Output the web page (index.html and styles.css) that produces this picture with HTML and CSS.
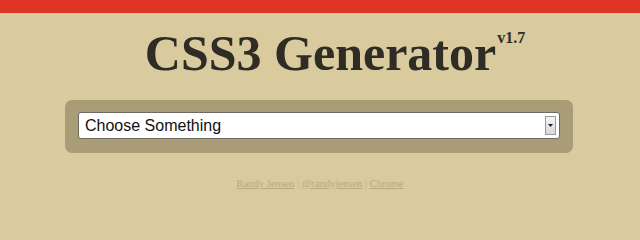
FILE: index.html
```html
<!DOCTYPE html>
<html>
<head>
<meta charset="utf-8">
<link rel="stylesheet" href="styles.css">
</head>
<body>
<div class="topbar"></div>
<header class="head">
  <h1 class="title">CSS3 Generator<sup class="ver">v1.7</sup></h1>
</header>
<div class="panel">
  <div class="select">
    <span class="select-text">Choose Something</span>
    <span class="select-btn"><svg width="5" height="3" viewBox="0 0 5 3"><path d="M0 0H5L2.5 3Z" fill="#222"/></svg></span>
  </div>
</div>
<footer class="foot">
  <a href="#">Randy Jensen</a> <span class="sep">|</span> <a href="#">@randyjensen</a> <span class="sep">|</span> <a href="#">Chrome</a>
</footer>
</body>
</html>
```
FILE: styles.css
```css
html, body {
  margin: 0;
  padding: 0;
  background: #d9cb9e;
}
body {
  width: 640px;
  height: 230px;
  overflow: hidden;
}
.topbar {
  height: 13px;
  background: #e03424;
}
.head {
  display: flex;
  justify-content: center;
  padding-top: 13px;
  height: 69px;
  box-sizing: border-box;
}
.title {
  margin: 0;
  font-family: "Liberation Serif", serif;
  font-weight: bold;
  font-size: 50px;
  line-height: 54px;
  color: #2f2c26;
  position: relative;
  left: 15px;
}
.ver {
  font-size: 16px;
  line-height: 16px;
  vertical-align: top;
  position: relative;
  top: 4px;
  margin-left: 1px;
}
.panel {
  margin: 18px 0 0 65px;
  width: 508px;
  height: 53px;
  box-sizing: border-box;
  padding: 12px 13px 0 13px;
  background: #a89d77;
  border-radius: 7px;
}
.select {
  height: 27px;
  box-sizing: border-box;
  background: #fff;
  border: 1px solid #6f6b62;
  border-radius: 3px;
  display: flex;
  align-items: center;
  padding: 0 3px 0 6px;
}
.select-text {
  flex: 1;
  font-family: "Liberation Sans", Arial, sans-serif;
  font-size: 16px;
  color: #111;
}
.select-btn {
  width: 11px;
  height: 19px;
  box-sizing: border-box;
  border: 1px solid #9a9a9a;
  background: linear-gradient(#f4f4f4, #d8d8d8);
  display: flex;
  align-items: center;
  justify-content: center;
}
.foot {
  margin-top: 25px;
  text-align: center;
  font-family: "Liberation Serif", serif;
  font-size: 10.5px;
  font-weight: normal;
  color: #bdb085;
}
.foot a {
  color: #b8aa7e;
  text-decoration: underline;
}
.sep {
  color: #bfb38a;
}
```
